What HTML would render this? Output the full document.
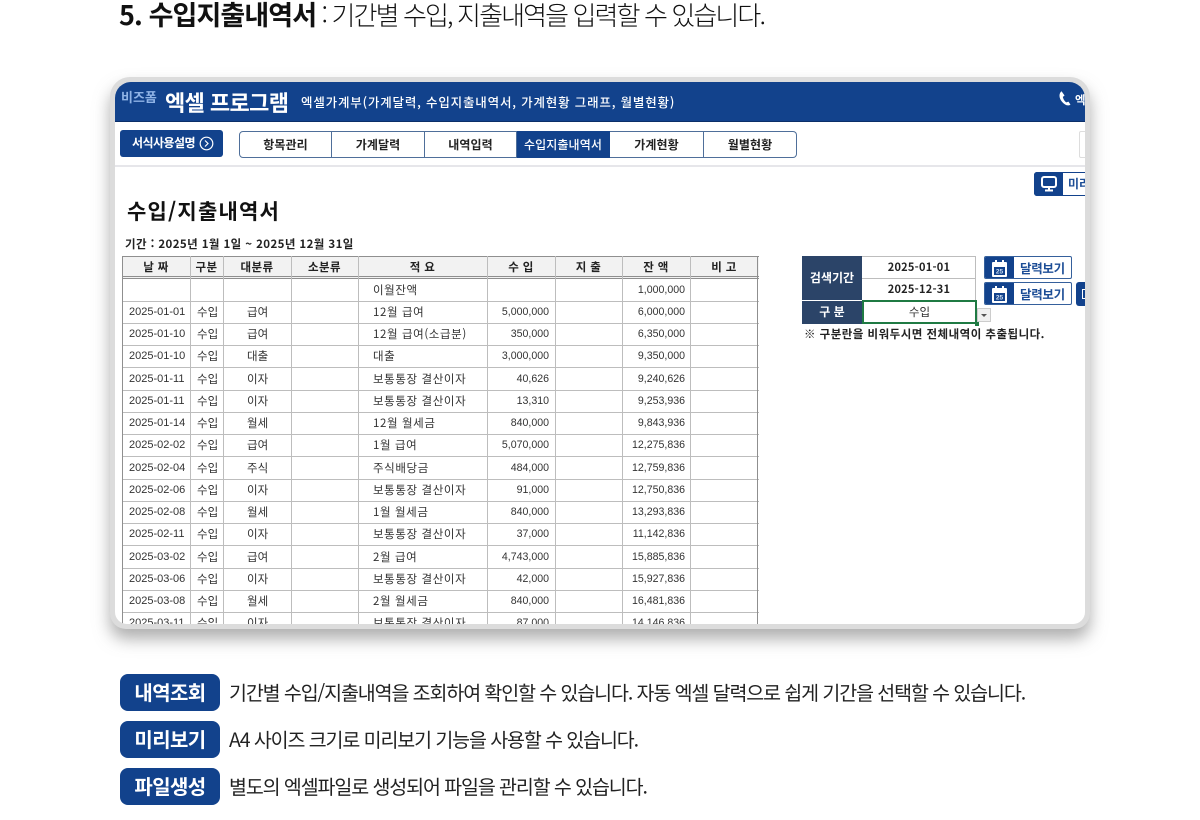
<!DOCTYPE html>
<html lang="ko"><head><meta charset="utf-8"><title>수입지출내역서</title>
<style>
*{box-sizing:border-box;margin:0;padding:0}
html,body{width:1200px;height:820px;overflow:hidden;background:#fff}
body{position:relative;font-family:"Liberation Sans","Noto Sans CJK KR",sans-serif;color:#111}
.a{position:absolute;white-space:nowrap}
.k{font-family:"Noto Sans CJK KR","Liberation Sans",sans-serif}
.pill{position:absolute;left:120px;width:100px;height:37px;background:#12428c;border-radius:8px;color:#fff;font:700 20px/36px "Noto Sans CJK KR",sans-serif;text-align:center;letter-spacing:-.6px}
.desc{position:absolute;left:229px;font:400 19.5px/26px "Noto Sans CJK KR",sans-serif;color:#222;letter-spacing:-1.1px;white-space:nowrap}
#frame{position:absolute;left:110px;top:77px;width:980px;height:552px;background:#dcdcdc;border-radius:20px 20px 16px 16px;box-shadow:0 10px 16px rgba(110,110,110,.55)}
#clip{position:absolute;left:115px;top:82px;width:970px;height:542px;background:#fff;overflow:hidden;border-radius:16px 16px 12px 12px}
#in{position:absolute;left:-115px;top:-82px;width:1200px;height:820px;font-family:"Noto Sans CJK KR","Liberation Sans",sans-serif}
.tab{position:absolute;top:131px;height:27px;border:1px solid #4f6f9a;border-left:0;font:700 12px/25px "Noto Sans CJK KR",sans-serif;text-align:center;color:#222;background:#fff;letter-spacing:.1px}
.r{position:absolute;left:122px;width:637px;height:23px;border-bottom:1px solid #bdbdbd;font-size:10.6px;color:#333}
.r span{position:absolute;top:0;line-height:22px;white-space:nowrap}
.d{left:7px;font-family:"Liberation Sans",sans-serif;font-size:11px}.g{left:75px;font-size:11.5px}.c{left:125px;font-size:11.5px}.t{left:251px;font-size:11.5px;letter-spacing:.6px}.n{right:210px;font-family:"Liberation Sans",sans-serif}.b{right:74px;font-family:"Liberation Sans",sans-serif}
.v{position:absolute;top:256px;width:1px;height:368px;background:#bdbdbd}
.h{position:absolute;top:256px;height:23px;font:700 11.5px/22px "Noto Sans CJK KR",sans-serif;text-align:center;color:#222;letter-spacing:.4px}
.cal{position:absolute;left:984px;width:88px;height:23px;border:1px solid #35609c;border-radius:2px;background:#fff;overflow:hidden}
.cal i{position:absolute;left:0;top:0;width:29px;height:23px;background:#12428c}
.cal b{position:absolute;left:35px;top:0;font:700 12.5px/22px "Noto Sans CJK KR",sans-serif;color:#1c4d96;letter-spacing:-.3px}
.cal svg{position:absolute;left:6px;top:2px}
</style></head><body>
<div class="a k" style="left:119px;top:-4px;font-size:26px;line-height:36px;letter-spacing:-1.9px;color:#111"><b style="font-size:27px;letter-spacing:-.9px">5. 수입지출내역서</b><span style="font-weight:300"> : 기간별 수입, 지출내역을 입력할 수 있습니다.</span></div>

<div id="frame"></div>
<div id="clip"><div id="in">
  <div class="a" style="left:115px;top:82px;width:970px;height:40px;background:#12428c;border-bottom:1px solid #0b2f68"></div>
  <div class="a" style="left:121px;top:88px;font:700 13px/18px 'Noto Sans CJK KR',sans-serif;color:#8fb3e6;letter-spacing:0">비즈폼</div>
  <div class="a" style="left:165px;top:85px;font:700 22px/34px 'Noto Sans CJK KR',sans-serif;color:#fff;letter-spacing:-.6px">엑셀 프로그램</div>
  <div class="a" style="left:301px;top:92px;font:500 12.5px/20px 'Noto Sans CJK KR',sans-serif;color:#fff;letter-spacing:.82px">엑셀가계부(가계달력, 수입지출내역서, 가계현황 그래프, 월별현황)</div>
  <svg class="a" style="left:1057px;top:89px" width="18" height="19" viewBox="0 0 16 17"><path d="M4 2C1.500 4 1.500 8 4.500 11.500C7 14.500 10 15.500 12 14L10.200 11.300L8.300 12C6.800 11 5.500 9 5.200 7L6.700 5.800Z" fill="#fff"/></svg>
  <div class="a" style="left:1075px;top:92px;width:10px;overflow:hidden;font:700 11.5px/16px 'Noto Sans CJK KR',sans-serif;color:#fff">엑셀</div>

  <div class="a" style="left:120px;top:130px;width:103px;height:27px;background:#12428c;border-radius:3px;color:#fff;font:700 12px/26px 'Noto Sans CJK KR',sans-serif;padding-left:12px;letter-spacing:-.55px">서식사용설명</div>
  <svg class="a" style="left:199px;top:136px" width="15" height="15" viewBox="0 0 15 15"><circle cx="7.500" cy="7.500" r="6.300" fill="none" stroke="#fff" stroke-width="1.200"/><path d="M6 4.500L9 7.500L6 10.500" fill="none" stroke="#fff" stroke-width="1.200"/></svg>

  <div class="tab" style="left:239px;width:93px;border-left:1px solid #4f6f9a;border-radius:4px 0 0 4px">항목관리</div>
  <div class="tab" style="left:332px;width:93px">가계달력</div>
  <div class="tab" style="left:425px;width:92px">내역입력</div>
  <div class="tab" style="left:517px;width:93px;background:#12428c;color:#fff;font-weight:500;border-color:#12428c">수입지출내역서</div>
  <div class="tab" style="left:610px;width:94px">가계현황</div>
  <div class="tab" style="left:704px;width:93px;border-radius:0 4px 4px 0">월별현황</div>
  <div class="a" style="left:1079px;top:131px;width:12px;height:27px;border:1px solid #ddd;border-radius:2px"></div>
  <div class="a" style="left:115px;top:165px;width:970px;height:2px;background:#e6e6ea"></div>

  <div class="a" style="left:1034px;top:172px;width:60px;height:24px;border:1px solid #12428c;border-radius:3px;background:#fff"></div>
  <div class="a" style="left:1034px;top:172px;width:29px;height:24px;background:#12428c;border-radius:3px 0 0 3px"></div>
  <svg class="a" style="left:1041px;top:176px" width="16" height="16" viewBox="0 0 16 16"><rect x="1" y="1" width="14" height="10" rx="2" fill="none" stroke="#fff" stroke-width="2"/><path d="M4 14.500H12M8 12V14" stroke="#fff" stroke-width="2"/></svg>
  <div class="a" style="left:1068px;top:174px;font:700 12px/20px 'Noto Sans CJK KR',sans-serif;color:#1c4d96">미리보기</div>

  <div class="a" style="left:127px;top:194px;font:700 21px/34px 'Noto Sans CJK KR',sans-serif;color:#111;letter-spacing:1.2px">수입/지출내역서</div>
  <div class="a" style="left:125px;top:235px;font:700 11.5px/18px 'Noto Sans CJK KR',sans-serif;color:#222;letter-spacing:.4px">기간 : 2025년 1월 1일 ~ 2025년 12월 31일</div>

  <div class="a" style="left:122px;top:256px;width:637px;height:23px;background:#f2f2f2;border-top:1px solid #8f8f8f;border-bottom:3px double #8f8f8f"></div>
  <div class="h" style="left:122px;width:68px">날 짜</div>
  <div class="h" style="left:190px;width:33px">구분</div>
  <div class="h" style="left:223px;width:68px">대분류</div>
  <div class="h" style="left:291px;width:67px">소분류</div>
  <div class="h" style="left:358px;width:129px">적 요</div>
  <div class="h" style="left:487px;width:68px">수 입</div>
  <div class="h" style="left:555px;width:67px">지 출</div>
  <div class="h" style="left:622px;width:68px">잔 액</div>
  <div class="h" style="left:690px;width:68px">비 고</div>

  <div class="r" style="top:278.500px"><span class="t" style="left:251px">이월잔액</span><span class="b">1,000,000</span></div>
  <div class="r" style="top:300.750px"><span class="d">2025-01-01</span><span class="g">수입</span><span class="c">급여</span><span class="t">12월 급여</span><span class="n">5,000,000</span><span class="b">6,000,000</span></div>
  <div class="r" style="top:323px"><span class="d">2025-01-10</span><span class="g">수입</span><span class="c">급여</span><span class="t">12월 급여(소급분)</span><span class="n">350,000</span><span class="b">6,350,000</span></div>
  <div class="r" style="top:345.250px"><span class="d">2025-01-10</span><span class="g">수입</span><span class="c">대출</span><span class="t">대출</span><span class="n">3,000,000</span><span class="b">9,350,000</span></div>
  <div class="r" style="top:367.500px"><span class="d">2025-01-11</span><span class="g">수입</span><span class="c">이자</span><span class="t">보통통장 결산이자</span><span class="n">40,626</span><span class="b">9,240,626</span></div>
  <div class="r" style="top:389.750px"><span class="d">2025-01-11</span><span class="g">수입</span><span class="c">이자</span><span class="t">보통통장 결산이자</span><span class="n">13,310</span><span class="b">9,253,936</span></div>
  <div class="r" style="top:412px"><span class="d">2025-01-14</span><span class="g">수입</span><span class="c">월세</span><span class="t">12월 월세금</span><span class="n">840,000</span><span class="b">9,843,936</span></div>
  <div class="r" style="top:434.250px"><span class="d">2025-02-02</span><span class="g">수입</span><span class="c">급여</span><span class="t">1월 급여</span><span class="n">5,070,000</span><span class="b">12,275,836</span></div>
  <div class="r" style="top:456.500px"><span class="d">2025-02-04</span><span class="g">수입</span><span class="c">주식</span><span class="t">주식배당금</span><span class="n">484,000</span><span class="b">12,759,836</span></div>
  <div class="r" style="top:478.750px"><span class="d">2025-02-06</span><span class="g">수입</span><span class="c">이자</span><span class="t">보통통장 결산이자</span><span class="n">91,000</span><span class="b">12,750,836</span></div>
  <div class="r" style="top:501px"><span class="d">2025-02-08</span><span class="g">수입</span><span class="c">월세</span><span class="t">1월 월세금</span><span class="n">840,000</span><span class="b">13,293,836</span></div>
  <div class="r" style="top:523.250px"><span class="d">2025-02-11</span><span class="g">수입</span><span class="c">이자</span><span class="t">보통통장 결산이자</span><span class="n">37,000</span><span class="b">11,142,836</span></div>
  <div class="r" style="top:545.500px"><span class="d">2025-03-02</span><span class="g">수입</span><span class="c">급여</span><span class="t">2월 급여</span><span class="n">4,743,000</span><span class="b">15,885,836</span></div>
  <div class="r" style="top:567.750px"><span class="d">2025-03-06</span><span class="g">수입</span><span class="c">이자</span><span class="t">보통통장 결산이자</span><span class="n">42,000</span><span class="b">15,927,836</span></div>
  <div class="r" style="top:590px"><span class="d">2025-03-08</span><span class="g">수입</span><span class="c">월세</span><span class="t">2월 월세금</span><span class="n">840,000</span><span class="b">16,481,836</span></div>
  <div class="r" style="top:612.250px"><span class="d">2025-03-11</span><span class="g">수입</span><span class="c">이자</span><span class="t">보통통장 결산이자</span><span class="n">87,000</span><span class="b">14,146,836</span></div>

  <div class="v" style="left:122px;background:#8f8f8f"></div>
  <div class="v" style="left:190px"></div><div class="v" style="left:223px"></div><div class="v" style="left:291px"></div>
  <div class="v" style="left:358px"></div><div class="v" style="left:487px"></div><div class="v" style="left:555px"></div>
  <div class="v" style="left:622px"></div><div class="v" style="left:690px"></div>
  <div class="v" style="left:757px;background:#8f8f8f"></div>

  <div class="a" style="left:802px;top:256px;width:60px;height:44px;background:#2b4468;color:#fff;font:700 12px/44px 'Noto Sans CJK KR',sans-serif;text-align:center">검색기간</div>
  <div class="a" style="left:802px;top:301px;width:60px;height:23px;background:#2b4468;color:#fff;font:700 12px/22px 'Noto Sans CJK KR',sans-serif;text-align:center">구 분</div>
  <div class="a" style="left:862px;top:256px;width:114px;height:45px;border:1px solid #bdbdbd;border-left:0"></div>
  <div class="a" style="left:862px;top:278px;width:114px;height:1px;background:#bdbdbd"></div>
  <div class="a" style="left:862px;top:257px;width:114px;text-align:center;font:700 11px/21px 'Noto Sans CJK KR',sans-serif;color:#222;letter-spacing:.25px">2025-01-01</div>
  <div class="a" style="left:862px;top:279px;width:114px;text-align:center;font:700 11px/21px 'Noto Sans CJK KR',sans-serif;color:#222;letter-spacing:.25px">2025-12-31</div>
  <div class="a" style="left:862px;top:300px;width:115px;height:24px;border:2px solid #1f7a43;text-align:center;font:400 11.5px/20px 'Noto Sans CJK KR',sans-serif;color:#333">수입</div>
  <div class="a" style="left:975px;top:322px;width:4px;height:4px;background:#1f7a43"></div>
  <div class="a" style="left:977px;top:308px;width:14px;height:14px;background:#f0f0f0;border:1px solid #ccc"></div>
  <div class="a" style="left:981px;top:314px;width:0;height:0;border-left:3px solid transparent;border-right:3px solid transparent;border-top:3px solid #555"></div>
  <div class="a" style="left:804px;top:325px;font:700 11.5px/18px 'Noto Sans CJK KR',sans-serif;color:#222;letter-spacing:.47px">※ 구분란을 비워두시면 전체내역이 추출됩니다.</div>

  <div class="cal" style="top:256px"><i></i><svg width="17" height="19" viewBox="0 0 17 19"><rect x="1" y="3" width="15" height="15" rx="1" fill="#fff"/><rect x="4" y="1" width="2" height="4" fill="#fff"/><rect x="11" y="1" width="2" height="4" fill="#fff"/><rect x="3" y="8" width="11" height="8" fill="#12428c"/><text x="8.500" y="14.500" font-size="6.500" font-weight="700" fill="#cfe0f5" text-anchor="middle" font-family="Liberation Sans">25</text></svg><b>달력보기</b></div>
  <div class="cal" style="top:282px"><i></i><svg width="17" height="19" viewBox="0 0 17 19"><rect x="1" y="3" width="15" height="15" rx="1" fill="#fff"/><rect x="4" y="1" width="2" height="4" fill="#fff"/><rect x="11" y="1" width="2" height="4" fill="#fff"/><rect x="3" y="8" width="11" height="8" fill="#12428c"/><text x="8.500" y="14.500" font-size="6.500" font-weight="700" fill="#cfe0f5" text-anchor="middle" font-family="Liberation Sans">25</text></svg><b>달력보기</b></div>
  <div class="a" style="left:1076px;top:282px;width:20px;height:24px;background:#12428c;border-radius:3px"></div>
  <div class="a" style="left:1082px;top:289px;width:5px;height:10px;border:1px solid #fff"></div>
</div></div>

<div class="pill" style="top:674px">내역조회</div>
<div class="desc" style="top:679px">기간별 수입/지출내역을 조회하여 확인할 수 있습니다. 자동 엑셀 달력으로 쉽게 기간을 선택할 수 있습니다.</div>
<div class="pill" style="top:721px">미리보기</div>
<div class="desc" style="top:726px">A4 사이즈 크기로 미리보기 기능을 사용할 수 있습니다.</div>
<div class="pill" style="top:768px">파일생성</div>
<div class="desc" style="top:773px">별도의 엑셀파일로 생성되어 파일을 관리할 수 있습니다.</div>
</body></html>
